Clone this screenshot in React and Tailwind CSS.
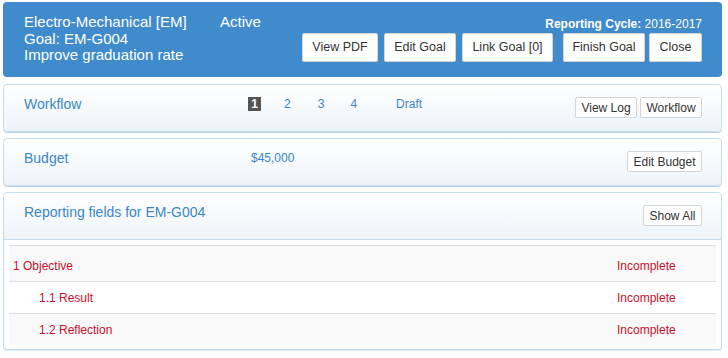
import React from "react";

const font = { fontFamily: '"Liberation Sans", Arial, sans-serif' };

function HBtn({ children, className = "" }) {
  return (
    <button
      style={font}
      className={`h-[29px] px-0 flex items-center justify-center whitespace-nowrap bg-white border border-[#d5d5d5] rounded-[2px] text-[12.5px] text-[#333] leading-none ${className}`}
    >
      {children}
    </button>
  );
}

function PBtn({ children, className = "" }) {
  return (
    <button
      style={font}
      className={`h-[21px] px-0 flex items-center justify-center whitespace-nowrap bg-white border border-[#d5d5d5] rounded-[2px] text-[12px] text-[#333] leading-none ${className}`}
    >
      {children}
    </button>
  );
}

function Panel({ children, className = "" }) {
  return (
    <div
      className={`border border-[#c6dded] rounded-[4px] bg-gradient-to-b from-white to-[#edf4f9] shadow-[0_1px_0_#bcd6e9] ${className}`}
    >
      {children}
    </div>
  );
}

export default function App() {
  const rows = [
    { label: "1 Objective", indent: false, bg: "bg-[#f9f9f9]", h: "h-[35px] pt-[4px]" },
    { label: "1.1 Result", indent: true, bg: "bg-white", h: "h-[32px]" },
    { label: "1.2 Reflection", indent: true, bg: "bg-[#f9f9f9]", h: "h-[32px]" },
  ];
  return (
    <div style={font} className="w-[728px] h-[358px] bg-white px-[3px] pt-[2px] pr-[6px]">
      {/* Header */}
      <div className="h-[75px] rounded-[4px] bg-[#3f8bcc] flex justify-between text-white">
        <div className="flex pl-[21px] pt-[12px]">
          <div className="w-[196px] text-[15px] leading-[16.5px]">
            <div>Electro-Mechanical [EM]</div>
            <div>Goal: EM-G004</div>
            <div>Improve graduation rate</div>
          </div>
          <div className="text-[15px] leading-[16.5px]">Active</div>
        </div>
        <div className="flex flex-col items-end pr-[20px] pt-[15px]">
          <div className="text-[12px] leading-[14px] h-[16px]">
            <span className="font-bold">Reporting Cycle:</span> 2016-2017
          </div>
          <div className="flex">
            <HBtn className="w-[76px]">View PDF</HBtn>
            <HBtn className="ml-[6px] w-[72px]">Edit Goal</HBtn>
            <HBtn className="ml-[6px] w-[91px]">Link Goal [0]</HBtn>
            <HBtn className="ml-[10px] w-[82px]">Finish Goal</HBtn>
            <HBtn className="ml-[4px] w-[53px]">Close</HBtn>
          </div>
        </div>
      </div>

      {/* Workflow */}
      <Panel className="mt-[7px] h-[48px] flex justify-between items-start pl-[20px] pr-[19px]">
        <div className="flex items-center pt-[9px] text-[#3b87c4]">
          <div className="w-[224px] text-[14px] leading-[20px]">Workflow</div>
          <div className="w-[13px] h-[14px] bg-[#555] text-white text-[12px] leading-[14px] text-center font-bold">1</div>
          <div className="ml-[23px] text-[12px] leading-[20px]">2</div>
          <div className="ml-[27px] text-[12px] leading-[20px]">3</div>
          <div className="ml-[26px] text-[12px] leading-[20px]">4</div>
          <div className="ml-[39px] text-[12px] leading-[20px]">Draft</div>
        </div>
        <div className="flex pt-[12px]">
          <PBtn className="w-[62px]">View Log</PBtn>
          <PBtn className="ml-[3px] w-[62px]">Workflow</PBtn>
        </div>
      </Panel>

      {/* Budget */}
      <Panel className="mt-[6px] h-[48px] flex justify-between items-start pl-[20px] pr-[19px]">
        <div className="flex items-center pt-[9px] text-[#3b87c4]">
          <div className="w-[227px] text-[14px] leading-[20px]">Budget</div>
          <div className="text-[12px] leading-[20px]">$45,000</div>
        </div>
        <div className="flex pt-[12px]">
          <PBtn className="w-[75px]">Edit Budget</PBtn>
        </div>
      </Panel>

      {/* Reporting */}
      <div className="mt-[6px] h-[158px] border border-[#c6dded] rounded-[4px] bg-white shadow-[0_1px_0_#dbe9f3]">
        <div className="h-[47px] border-b border-[#c6dded] rounded-t-[4px] bg-gradient-to-b from-white to-[#edf4f9] flex justify-between items-start pl-[20px] pr-[19px]">
          <div className="pt-[9px] text-[14px] leading-[20px] text-[#3b87c4]">Reporting fields for EM-G004</div>
          <div className="pt-[12px]">
            <PBtn className="w-[59px]">Show All</PBtn>
          </div>
        </div>
        <div className="px-[5px] pt-[5px]">
          <div className="border-t border-[#dddddd]">
            {rows.map((r, i) => (
              <div
                key={r.label}
                className={`${r.h} ${r.bg} ${i > 0 ? "border-t border-[#dddddd]" : ""} flex items-center text-[12px] text-[#c8102e]`}
              >
                <div className={`${r.indent ? "pl-[30px] w-[608px]" : "pl-[4px] w-[608px]"}`}>{r.label}</div>
                <div>Incomplete</div>
              </div>
            ))}
          </div>
        </div>
      </div>
    </div>
  );
}
